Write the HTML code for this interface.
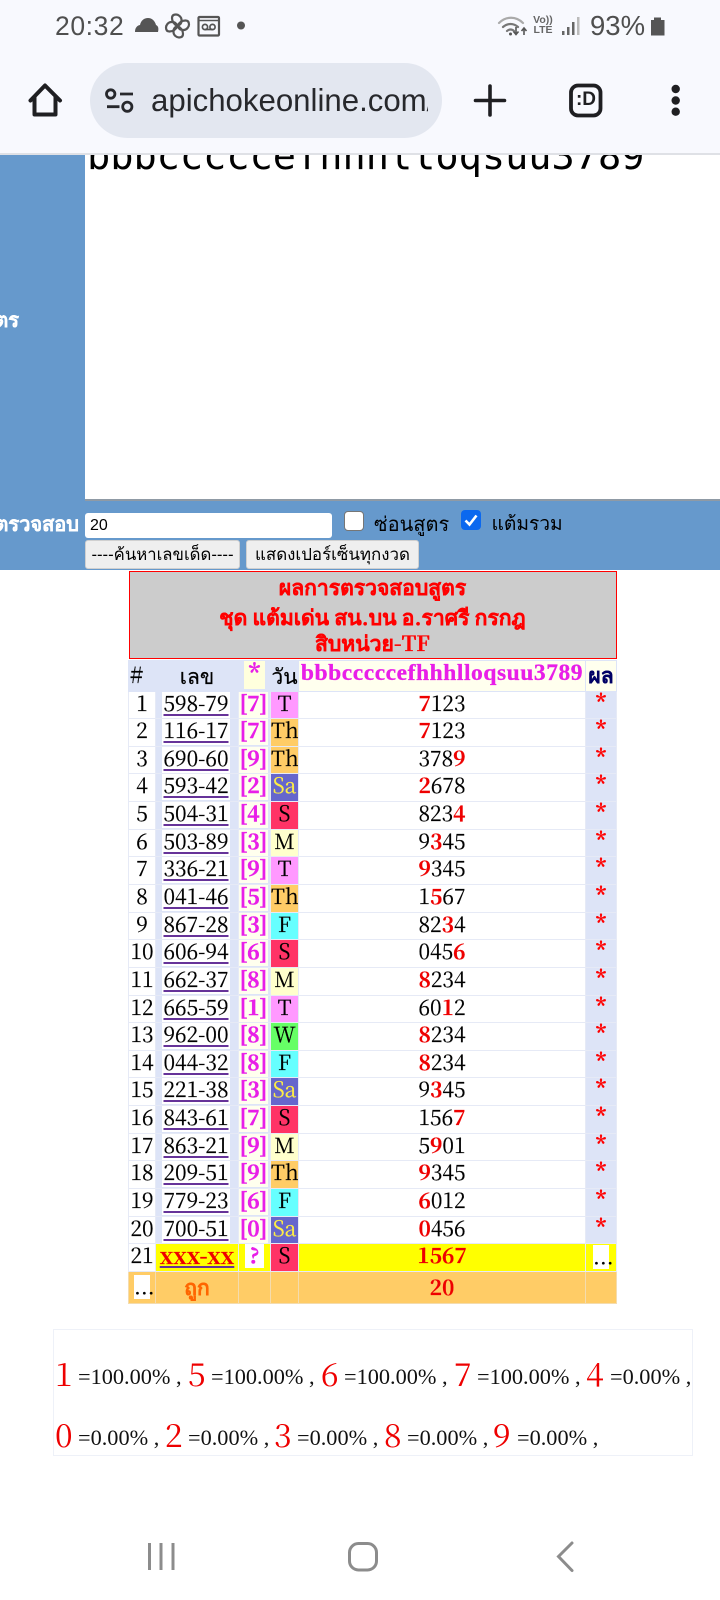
<!DOCTYPE html>
<html lang="th"><head><meta charset="utf-8"><title>apichokeonline</title>
<style>
html,body{margin:0;padding:0;background:#fff}
#p{position:relative;width:720px;height:1600px;overflow:hidden;background:#fff;font-family:"Liberation Sans","Noto Sans CJK SC",sans-serif}
.a{position:absolute;white-space:nowrap}
svg{position:absolute;overflow:visible}
table{position:absolute;left:128px;top:659.500px;width:488px;border-collapse:collapse;table-layout:fixed;font-family:"Noto Serif CJK SC","Liberation Serif",serif;font-size:21px;color:#000;-webkit-text-stroke:.2px}
td{padding:0;height:27.65px;line-height:23px;vertical-align:top;text-align:center;border:1px solid #e6eaf6;overflow:hidden;white-space:nowrap;box-sizing:border-box}
tr.h td{height:31px;background:#dde4f7;border-color:#dde4f7;line-height:27px}
.l{background:#dde4f7}
.l a{background:#fff;color:#000;text-decoration:underline;text-decoration-color:#639;text-decoration-thickness:2px;text-underline-offset:3px;padding:0 1px;position:relative;left:-1px}
.s{background:#dde4f7;text-align:left}
.s b{background:#ffe;color:#e81ee8;font-weight:700;display:inline-block;width:29px;height:26px;line-height:23px;text-align:center;vertical-align:top;-webkit-text-stroke:.5px #e81ee8}
.r{background:#dde4f7;color:#f00;font-weight:700;line-height:20px;-webkit-text-stroke:.4px #f00}
.n b{color:#e00}
.T{background:#f9f}.Th{background:#fc6}.Sa{background:#66c;color:#fe4;-webkit-text-stroke:.2px #fe4}.S{background:#f36}.M{background:#ffc}.F{background:#6ff}.W{background:#6f6}
.y{background:#ff0}.o{background:#fc6;border-color:#f4dcae;vertical-align:middle;line-height:26px}
.w{background:#fff;display:inline-block;width:16px;line-height:22px;height:24px;vertical-align:top;margin-top:1px}
#sum{position:absolute;left:53px;top:1329px;width:640px;height:127px;box-sizing:border-box;border:1px solid #eef1f8}
.d{position:absolute;color:#e00;font:32px "Noto Serif CJK SC","Liberation Serif",serif;line-height:40px}
.v{position:absolute;color:#111;font:22.300px "Liberation Serif",serif;line-height:24px;white-space:nowrap}
</style></head><body><div id="p">

<div class="a" style="left:0;top:0;width:720px;height:155px;background:#f8f9fe;border-bottom:2px solid #dfe1e6;box-sizing:border-box"></div>
<div class="a" style="left:90px;top:63px;width:352px;height:75px;border-radius:38px;background:#e3e7f0"></div>

<div class="a" style="left:55px;top:11px;font-size:26.500px;letter-spacing:.6px;color:#4f4f4f;line-height:30px">20:32</div>
<svg style="left:0;top:0" width="720" height="155" viewBox="0 0 720 155">
<path d="M135 32c0-4 2-6.500 5-7 1-4.500 4-7 8-7s7 3 8 7c2 .8 3 3 2 7z" fill="#555"/>
<g fill="none" stroke="#555" stroke-width="2.200"><path d="M177.500 26c-4-2-5.500-5-5.500-8s2-3.500 4-3.500 5.500 2 5.500 5.500-1 4.500-4 6zM177.500 26c2-4 5-5.500 8-5.500s3.500 2 3.500 4-2 5.500-5.500 5.500-4.500-1-6-4zM177.500 26c4 2 5.500 5 5.500 8s-2 3.500-4 3.500-5.500-2-5.500-5.500 1-4.500 4-6zM177.500 26c-2 4-5 5.500-8 5.500s-3.500-2-3.500-4 2-5.500 5.500-5.500 4.500 1 6 4z"/>
<rect x="198.500" y="17" width="20.500" height="18.500" rx="1"/><circle cx="205" cy="27" r="2.600" stroke-width="1.700"/><circle cx="212.500" cy="27" r="2.600" stroke-width="1.700"/><path d="M205 29.500h7.500" stroke-width="1.700"/><path d="M199 20.500h19" stroke-width="1.500"/></g>
<circle cx="241" cy="25.500" r="4" fill="#555"/>
<g fill="none" stroke="#777" stroke-width="2.200" stroke-linecap="round"><path d="M499 23c7-7 17-7 24 0" stroke="#aaa"/><path d="M503 27c4.500-4 10.500-4 15 0"/><path d="M507 31c2-2 5-2 7 0"/></g>
<path d="M516 27v7M513.500 31.500l2.500 3 2.500-3M524 35v-7M521.500 31l2.500-3 2.500 3" fill="none" stroke="#555" stroke-width="1.600"/>
<circle cx="510.500" cy="34" r="1.500" fill="#555"/>
<g fill="#666"><rect x="562" y="31" width="2.500" height="4"/><rect x="567" y="27" width="2.500" height="8"/><rect x="572" y="22" width="2.500" height="13"/></g><rect x="577" y="17" width="2.500" height="18" fill="#bbb"/>
<path d="M651 20h3v-2.500h7v2.500h3.500v15.500h-13.500z" fill="#555"/>

<path d="M30.500 100.500L45 85.500l15 15M34.500 97v17.500h21V97" fill="none" stroke="#1f1f22" stroke-width="4" stroke-linejoin="round" stroke-linecap="round"/>
<g fill="none" stroke="#27282c" stroke-width="2.800"><circle cx="110.700" cy="94" r="4.200"/><circle cx="127.300" cy="106.700" r="4.600"/><path d="M120 94h13M107 106.700h12.500"/></g>
<path d="M490 86v29M475.500 100.500h29" stroke="#1f1f22" stroke-width="3.600" stroke-linecap="round"/>
<rect x="571" y="85.500" width="29.500" height="30" rx="7" fill="none" stroke="#1f1f22" stroke-width="3.800"/>
<g fill="#1f1f22"><circle cx="675.700" cy="89" r="4.200"/><circle cx="675.700" cy="100.500" r="4.200"/><circle cx="675.700" cy="111.700" r="4.200"/></g>
</svg>
<div class="a" style="left:533px;top:15px;font:700 10.500px/10px 'Liberation Sans',sans-serif;color:#666;text-align:center;width:20px">Vo))<br>LTE</div>
<div class="a" style="left:590px;top:11px;font-size:27.500px;color:#4f4f4f;line-height:30px">93%</div>
<div class="a" style="left:151px;top:82px;width:277px;height:40px;overflow:hidden;font-size:31.200px;line-height:38px;color:#27282c">apichokeonline.com/</div>
<div class="a" style="left:570px;top:88px;width:32px;text-align:center;font:700 19px/24px 'Liberation Sans',sans-serif;color:#1f1f22">:D</div>

<div class="a" style="left:0;top:155px;width:720px;height:415px;background:#69c"></div>
<div class="a" style="left:85px;top:155px;width:635px;height:346px;background:#fff;border-bottom:2px solid #8f9aa5;box-sizing:border-box;overflow:hidden"><div class="a" style="left:2px;top:-21px;font:38.600px/46px 'DejaVu Sans Mono',monospace;color:#000">bbbcccccefhhhlloqsuu3789</div></div>
<div class="a" style="right:701px;top:308px;font-weight:700;font-size:20px;line-height:26px;color:#fff;-webkit-text-stroke:.3px #fff">สูตร</div>
<div class="a" style="right:641px;top:512px;font-weight:700;font-size:20px;line-height:26px;color:#fff;-webkit-text-stroke:.3px #fff">ตรวจสอบ</div>
<div class="a" style="left:85px;top:512.500px;width:247px;height:25.500px;background:#fff;border-radius:3px;font-size:16px;line-height:25px;text-indent:5px;color:#000">20</div>
<div class="a" style="left:344px;top:511px;width:20px;height:20px;background:#fff;border:1px solid #767676;box-sizing:border-box;border-radius:4px"></div>
<div class="a" style="left:374px;top:511px;font-size:20px;line-height:28px;color:#000">ซ่อนสูตร</div>
<div class="a" style="left:461px;top:510px;width:20px;height:20px;background:#0b68ef;border-radius:4px"></div>
<svg style="left:461px;top:510px" width="20" height="20"><path d="M4.500 10.500l4 4 7-9" fill="none" stroke="#fff" stroke-width="2.600"/></svg>
<div class="a" style="left:491.500px;top:511px;font-size:19.200px;line-height:28px;color:#000">แต้มรวม</div>
<div class="a" style="left:85px;top:540px;width:155px;height:29px;box-sizing:border-box;background:#efefef;border:1px solid #d0d0d0;border-radius:3px;text-align:center;font-size:16.700px;line-height:27px;color:#000">----ค้นหาเลขเด็ด----</div>
<div class="a" style="left:246px;top:540px;width:173px;height:29px;box-sizing:border-box;background:#efefef;border:1px solid #d0d0d0;border-radius:3px;text-align:center;font-size:16.900px;line-height:27px;color:#000">แสดงเปอร์เซ็นทุกงวด</div>

<div class="a" style="left:128.500px;top:571px;width:488px;height:88px;box-sizing:border-box;background:#ccc;border:1px solid #f00;text-align:center;color:#f00;font:700 21.100px/28px 'Noto Serif CJK SC','Liberation Serif',serif;padding-top:3px;-webkit-text-stroke:.3px #f00"><div style="position:relative;top:-2px">ผลการตรวจสอบสูตร</div><div>ชุด แต้มเด่น สน.บน อ.ราศรี กรกฎ</div><div style="position:relative;top:-2px">สิบหน่วย-TF</div></div>

<table>
<colgroup><col style="width:27px"><col style="width:83px"><col style="width:32px"><col style="width:28px"><col style="width:287px"><col style="width:31px"></colgroup>
<tr class="h"><td style="text-align:left;padding-left:1px;font-size:23px;line-height:25px">#</td><td style="line-height:30px">เลข</td><td><span style="background:#ffd;color:#e81ee8;font-weight:700;padding:0 5px;display:inline-block;height:28px;line-height:22px;font-size:24px;-webkit-text-stroke:.4px #e81ee8">*</span></td><td style="line-height:30px">วัน</td><td style="background:#ffe;color:#e81ee8;font-weight:700;font-size:23.500px;line-height:25px;font-family:'Liberation Serif',serif;letter-spacing:.55px;-webkit-text-stroke:.3px #e81ee8">bbbcccccefhhhlloqsuu3789</td><td style="background:#ffe;color:#006;font-weight:700;font-size:21px;line-height:29px">ผล</td></tr>
<tr><td>1</td><td class="l"><a>598-79</a></td><td class="s"><b>[7]</b></td><td class="T">T</td><td class="n"><b>7</b>123</td><td class="r">*</td></tr>
<tr><td>2</td><td class="l"><a>116-17</a></td><td class="s"><b>[7]</b></td><td class="Th">Th</td><td class="n"><b>7</b>123</td><td class="r">*</td></tr>
<tr><td>3</td><td class="l"><a>690-60</a></td><td class="s"><b>[9]</b></td><td class="Th">Th</td><td class="n">378<b>9</b></td><td class="r">*</td></tr>
<tr><td>4</td><td class="l"><a>593-42</a></td><td class="s"><b>[2]</b></td><td class="Sa">Sa</td><td class="n"><b>2</b>678</td><td class="r">*</td></tr>
<tr><td>5</td><td class="l"><a>504-31</a></td><td class="s"><b>[4]</b></td><td class="S">S</td><td class="n">823<b>4</b></td><td class="r">*</td></tr>
<tr><td>6</td><td class="l"><a>503-89</a></td><td class="s"><b>[3]</b></td><td class="M">M</td><td class="n">9<b>3</b>45</td><td class="r">*</td></tr>
<tr><td>7</td><td class="l"><a>336-21</a></td><td class="s"><b>[9]</b></td><td class="T">T</td><td class="n"><b>9</b>345</td><td class="r">*</td></tr>
<tr><td>8</td><td class="l"><a>041-46</a></td><td class="s"><b>[5]</b></td><td class="Th">Th</td><td class="n">1<b>5</b>67</td><td class="r">*</td></tr>
<tr><td>9</td><td class="l"><a>867-28</a></td><td class="s"><b>[3]</b></td><td class="F">F</td><td class="n">82<b>3</b>4</td><td class="r">*</td></tr>
<tr><td>10</td><td class="l"><a>606-94</a></td><td class="s"><b>[6]</b></td><td class="S">S</td><td class="n">045<b>6</b></td><td class="r">*</td></tr>
<tr><td>11</td><td class="l"><a>662-37</a></td><td class="s"><b>[8]</b></td><td class="M">M</td><td class="n"><b>8</b>234</td><td class="r">*</td></tr>
<tr><td>12</td><td class="l"><a>665-59</a></td><td class="s"><b>[1]</b></td><td class="T">T</td><td class="n">60<b>1</b>2</td><td class="r">*</td></tr>
<tr><td>13</td><td class="l"><a>962-00</a></td><td class="s"><b>[8]</b></td><td class="W">W</td><td class="n"><b>8</b>234</td><td class="r">*</td></tr>
<tr><td>14</td><td class="l"><a>044-32</a></td><td class="s"><b>[8]</b></td><td class="F">F</td><td class="n"><b>8</b>234</td><td class="r">*</td></tr>
<tr><td>15</td><td class="l"><a>221-38</a></td><td class="s"><b>[3]</b></td><td class="Sa">Sa</td><td class="n">9<b>3</b>45</td><td class="r">*</td></tr>
<tr><td>16</td><td class="l"><a>843-61</a></td><td class="s"><b>[7]</b></td><td class="S">S</td><td class="n">156<b>7</b></td><td class="r">*</td></tr>
<tr><td>17</td><td class="l"><a>863-21</a></td><td class="s"><b>[9]</b></td><td class="M">M</td><td class="n">5<b>9</b>01</td><td class="r">*</td></tr>
<tr><td>18</td><td class="l"><a>209-51</a></td><td class="s"><b>[9]</b></td><td class="Th">Th</td><td class="n"><b>9</b>345</td><td class="r">*</td></tr>
<tr><td>19</td><td class="l"><a>779-23</a></td><td class="s"><b>[6]</b></td><td class="F">F</td><td class="n"><b>6</b>012</td><td class="r">*</td></tr>
<tr><td>20</td><td class="l"><a>700-51</a></td><td class="s"><b>[0]</b></td><td class="Sa">Sa</td><td class="n"><b>0</b>456</td><td class="r">*</td></tr>
<tr><td>21</td><td class="y" style="color:#e00;font-weight:700;font-size:22.500px;text-decoration:underline;text-decoration-color:#639">xxx-xx</td><td class="y"><span style="background:#fff;color:#e81ee8;font-weight:700;padding:0 5px;display:inline-block;height:24px;-webkit-text-stroke:.5px #e81ee8">?</span></td><td class="S">S</td><td class="y" style="color:#e00;font-weight:700">1567</td><td class="y"><span class="w">...</span></td></tr>
<tr><td class="o" style="height:32px"><span class="w">...</span></td><td class="o" style="color:#f60;font-weight:700;height:32px">ถูก</td><td class="o"></td><td class="o"></td><td class="o" style="color:#e00;font-weight:700">20</td><td class="o"></td></tr>
</table>

<div id="sum"></div>
<span class="d" style="left:55px;top:1353px">1</span><span class="v" style="left:78px;top:1365px">=100.00% ,</span>
<span class="d" style="left:188px;top:1353px">5</span><span class="v" style="left:211px;top:1365px">=100.00% ,</span>
<span class="d" style="left:321px;top:1353px">6</span><span class="v" style="left:344px;top:1365px">=100.00% ,</span>
<span class="d" style="left:454px;top:1353px">7</span><span class="v" style="left:477px;top:1365px">=100.00% ,</span>
<span class="d" style="left:586px;top:1353px">4</span><span class="v" style="left:610px;top:1365px">=0.00% ,</span>
<span class="d" style="left:55px;top:1414px">0</span><span class="v" style="left:78px;top:1426px">=0.00% ,</span>
<span class="d" style="left:165px;top:1414px">2</span><span class="v" style="left:188px;top:1426px">=0.00% ,</span>
<span class="d" style="left:274px;top:1414px">3</span><span class="v" style="left:297px;top:1426px">=0.00% ,</span>
<span class="d" style="left:384px;top:1414px">8</span><span class="v" style="left:407px;top:1426px">=0.00% ,</span>
<span class="d" style="left:493px;top:1414px">9</span><span class="v" style="left:517px;top:1426px">=0.00% ,</span>

<svg style="left:0;top:1530px" width="720" height="60" viewBox="0 1530 720 60">
<g fill="none" stroke="#8c8c8c" stroke-width="3"><path d="M149.500 1543v27M161 1543v27M173 1543v27"/>
<rect x="349.500" y="1543.500" width="27" height="26.500" rx="9"/>
<path d="M572 1543l-13.500 13.500L572 1570.500" stroke-linecap="round"/></g>
</svg>
</div></body></html>
